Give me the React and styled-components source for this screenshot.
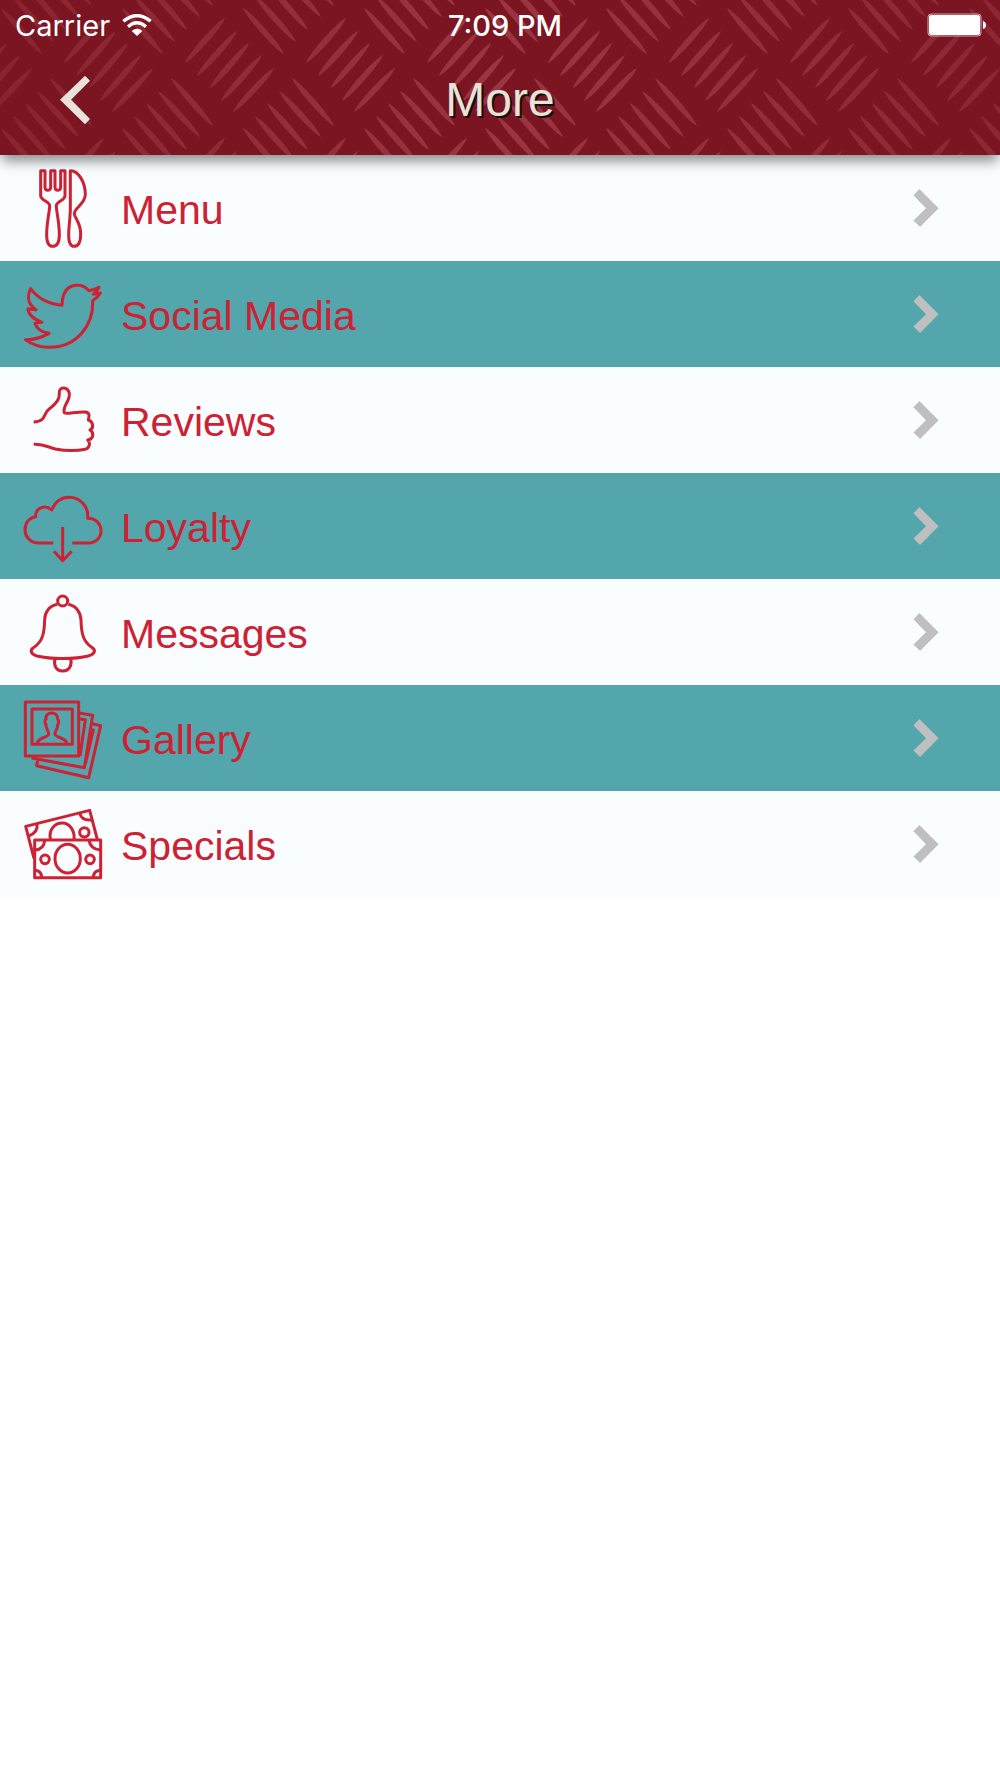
import React from "react";
import styled, { createGlobalStyle } from "styled-components";

const SLASHES = [
  [185, 63, 225, 18],
  [197, 76, 237, 31],
  [210, 88, 249, 43],
  [221, 101, 262, 55],
  [233, 112, 274, 68],
];

const BACKSLASHES = [
  [171, 78, 213, 126],
  [158, 91, 200, 137],
  [146, 103, 187, 150],
  [134, 116, 175, 162],
  [122, 128, 163, 174],
];

const TILE_W = 121;
const TILE_H = 120;

// one raised tread: pointed at both ends, thicker in the middle
function tread([x1, y1, x2, y2]) {
  const dx = x2 - x1;
  const dy = y2 - y1;
  const len = Math.hypot(dx, dy);
  const nx = (-dy / len) * 4;
  const ny = (dx / len) * 4;
  const at = (t, side) => `${x1 + dx * t + nx * side} ${y1 + dy * t + ny * side}`;
  return `M${x1} ${y1}C${at(0.15, 1)} ${at(0.85, 1)} ${x2} ${y2}C${at(0.85, -1)} ${at(0.15, -1)} ${x1} ${y1}Z`;
}

const TREADS = [...SLASHES, ...BACKSLASHES].map(tread).join("");

function TreadPlate() {
  const copies = [];
  for (let col = -3; col <= 0; col++) {
    for (let row = -2; row <= 0; row++) {
      copies.push([col * TILE_W, row * TILE_H]);
    }
  }
  return (
    <Plate aria-hidden="true">
      <defs>
        <pattern id="treads" width={TILE_W} height={TILE_H} patternUnits="userSpaceOnUse">
          {copies.map(([x, y]) => (
            <path key={`${x},${y}`} d={TREADS} transform={`translate(${x} ${y})`} fill="#9c3542" />
          ))}
        </pattern>
      </defs>
      <rect width="100%" height="100%" fill="url(#treads)" />
    </Plate>
  );
}

function WifiIcon() {
  return (
    <svg width="30" height="22" viewBox="362 38 90 66" aria-hidden="true">
      <g fill="none" stroke="#fff" strokeWidth="10">
        <path d="M366 60Q407 26 448 60" />
        <path d="M380 76Q407 53 434 76" />
      </g>
      <path fill="#fff" d="M391 89Q407 76 423 89L407 104Z" />
    </svg>
  );
}

function BatteryIcon() {
  return (
    <svg width="60" height="24" viewBox="0 0 60 24" role="img" aria-label="Battery full">
      <rect x="1" y="1" width="53" height="22" rx="3" fill="none" stroke="#d9a9af" strokeWidth="1" />
      <rect x="2" y="2" width="51" height="20" rx="2" fill="#fff" />
      <path fill="#fff" d="M56 8Q59 9 59 12Q59 15 56 16Z" />
    </svg>
  );
}

function MenuIcon() {
  return (
    <Icon viewBox="72 42 234 234">
      <path d="M122 47H135V98Q136 106 143 106Q151 106 152 98V47H165V98Q166 106 173 106Q181 106 182 98V47H195V122C195 136 169 140 169 152C169 170 178 200 178 240C178 264 171 274 158 274C146 274 140 264 140 240C140 200 149 170 149 152C149 140 122 136 122 122Z" />
      <path d="M211 47C236 46 256 84 256 118C256 148 223 158 223 176C223 188 242 202 242 236C242 262 235 274 222 274C210 274 206 262 206 240C206 214 211 190 211 160Z" />
    </Icon>
  );
}

function TwitterIcon() {
  return (
    <Icon viewBox="72 45 234 234">
      <path d="M186 136C187 96 204 76 233 76C249 76 258 82 266 92Q282 90 297 82Q292 93 280 103L301 99Q294 112 278 122C281 196 230 262 148 262C116 262 92 251 76 239Q112 240 147 220Q112 214 105 190Q112 187 126 187Q85 172 84 146Q93 148 108 149C85 134 80 110 92 86C112 114 146 132 186 136Z" />
    </Icon>
  );
}

function ThumbIcon() {
  return (
    <Icon viewBox="72 33 234 234">
      <path d="M101 156C142 154 127 130 150 115C168 101 180 88 178 66C179 49 203 50 208 70C211 92 190 104 192 126C195 135 224 125 255 126C272 127 267 141 265 150C279 153 283 175 270 180C283 188 281 207 263 210C273 219 268 235 256 238C230 243 192 242 166 237C143 231 130 221 101 223" />
    </Icon>
  );
}

function CloudIcon() {
  return (
    <Icon viewBox="72 36 234 234">
      <path d="M160 204H114C90 204 75 184 75 164C75 144 88 127 107 125C105 100 135 86 155 105C166 80 184 67 207 67C241 67 267 95 263 130C289 130 303 148 303 167C303 188 287 204 265 204H217" />
      <path d="M188 156V256M162 229L188 257L215 229" />
    </Icon>
  );
}

function BellIcon() {
  return (
    <Icon viewBox="72 39 234 234">
      <circle cx="188" cy="63" r="15" />
      <path d="M172 73C146 78 134 99 134 120C133 157 129 183 103 201C86 211 94 223 111 228C150 238 226 238 265 228C283 223 291 211 274 201C248 183 244 157 243 120C242 99 230 78 205 73" />
      <path d="M165 236C160 255 168 273 188 273C208 273 217 255 212 236" />
    </Icon>
  );
}

function GalleryIcon() {
  return (
    <Icon viewBox="72 42 234 234">
      <path d="M76 51H236V213H76Z" />
      <path d="M96 72H217V178H96Z" />
      <path d="M112 174C114 158 143 158 146 148C147 137 136 131 138 118C135 118 133 105 138 103C133 78 176 78 173 103C178 105 176 118 173 118C175 131 164 137 165 148C168 158 197 158 200 174" />
      <path d="M237 84L278 91L253 248L95 219M237 101L256 104L240 213" />
      <path d="M277 116L302 122L266 278L110 242L113 227M276 134L280 135L256 237" />
    </Icon>
  );
}

function CashIcon() {
  return (
    <Icon viewBox="72 45 234 234">
      <path d="M102 205L77 109L269 61L292 148" />
      <path d="M111 102Q115 127 86 138M239 70Q246 93 275 90" />
      <path d="M151 148C146 119 163 99 187 99C210 99 225 124 222 148" />
      <circle cx="253" cy="127" r="14" />
      <path d="M104 150H302V263H104Z" />
      <path d="M134 151Q132 178 105 180M267 151Q271 178 301 180M105 241Q124 242 125 262M301 241Q281 242 280 262" />
      <ellipse cx="203" cy="206" rx="38" ry="43" />
      <circle cx="135" cy="208" r="13" />
      <circle cx="270" cy="208" r="13" />
    </Icon>
  );
}

const ITEMS = [
  { label: "Menu", icon: MenuIcon },
  { label: "Social Media", icon: TwitterIcon },
  { label: "Reviews", icon: ThumbIcon },
  { label: "Loyalty", icon: CloudIcon },
  { label: "Messages", icon: BellIcon },
  { label: "Gallery", icon: GalleryIcon },
  { label: "Specials", icon: CashIcon },
];

function App() {
  return (
    <>
      <GlobalStyle />
      <Header>
        <TreadPlate />
        <StatusBar>
          <Carrier>
            Carrier
            <WifiIcon />
          </Carrier>
          <Time>7:09 PM</Time>
          <Battery>
            <BatteryIcon />
          </Battery>
        </StatusBar>
        <NavBar>
          <BackButton aria-label="Back">
            <svg width="30" height="50" viewBox="180 223 90 150">
              <path fill="#e9e2da" d="M255 225L270 240L213 297L270 355L255 371L180 297Z" />
            </svg>
          </BackButton>
          <Title>More</Title>
        </NavBar>
      </Header>
      <List>
        {ITEMS.map(({ label, icon: ItemIcon }) => (
          <li key={label}>
            <RowLink href="#">
              <ItemIcon />
              <Label>{label}</Label>
              <Chevron viewBox="100 87 78 115">
                <path d="M119 87L177 145L121 202L101 182L139 145L101 106Z" />
              </Chevron>
            </RowLink>
          </li>
        ))}
      </List>
    </>
  );
}

export default App;

const GlobalStyle = createGlobalStyle`
  * {
    box-sizing: border-box;
  }
  body {
    margin: 0;
    background: #fff;
    font-family: "Liberation Sans", Helvetica, Arial, sans-serif;
  }
`;

const Header = styled.header`
  position: relative;
  z-index: 1;
  background: #7b1521;
  box-shadow: 0 8px 12px -2px rgba(0, 0, 0, 0.45);
`;

const Plate = styled.svg`
  position: absolute;
  top: 0;
  left: 0;
  width: 100%;
  height: 100%;
  mask-image: linear-gradient(to right, rgba(0, 0, 0, 0.45), #000 50%, rgba(0, 0, 0, 0.55));
`;

const StatusBar = styled.div`
  position: relative;
  display: grid;
  grid-template-columns: 1fr auto 1fr;
  align-items: center;
  height: 50px;
  padding: 0 5px 0 15px;
  color: #fff;
  font-family: Inter, sans-serif;
  font-size: 29px;
`;

const Carrier = styled.span`
  display: flex;
  align-items: center;
  gap: 12px;
`;

const Time = styled.span`
  font-weight: 500;
`;

const Battery = styled.span`
  display: flex;
  justify-content: flex-end;
  padding-right: 8px;
`;

const NavBar = styled.nav`
  position: relative;
  display: grid;
  grid-template-columns: 1fr auto 1fr;
  align-items: center;
  height: 105px;
  padding: 0 60px 6px;
`;

const BackButton = styled.button`
  justify-self: start;
  display: flex;
  padding: 0;
  border: none;
  background: none;
  cursor: pointer;
`;

const Title = styled.h1`
  margin: 0;
  color: #e9e2d8;
  font-size: 48px;
  font-weight: normal;
  text-shadow: 2px 2px 0 #111;
`;

const List = styled.ul`
  margin: 0;
  padding: 0;
  list-style: none;

  li {
    background: #f9fdff;
  }
  li:nth-child(even) {
    background: #53a6ac;
  }
`;

const RowLink = styled.a`
  display: flex;
  align-items: center;
  height: 106px;
  padding: 0 61px 0 24px;
  color: #cc2233;
  text-decoration: none;
`;

const Icon = styled.svg.attrs({ "aria-hidden": true })`
  flex: none;
  width: 78px;
  height: 78px;
  overflow: visible;
  fill: none;
  stroke: #cc2233;
  stroke-width: 9;
  stroke-linejoin: round;
`;

const Label = styled.span`
  flex: 1;
  padding: 4px 0 0 19px;
  font-size: 41px;
`;

const Chevron = styled.svg.attrs({ "aria-hidden": true })`
  flex: none;
  width: 26px;
  height: 38px;
  fill: #bfbfbf;
`;
